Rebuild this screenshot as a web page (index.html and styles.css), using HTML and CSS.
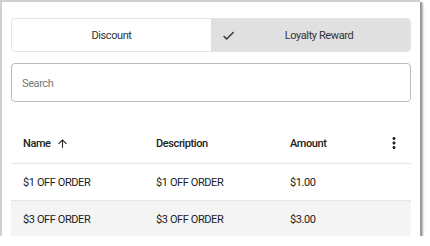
FILE: index.html
```html
<!DOCTYPE html>
<html lang="en">
<head>
    <meta charset="UTF-8">
    <meta name="viewport" content="width=device-width, initial-scale=1.0">
    <title>Rewards</title>
    <link rel="stylesheet" href="styles.css">
</head>
<body>
    <div class="panel">
        <div class="toggle">
            <button class="opt"><span class="label">Discount</span></button>
            <button class="opt selected">
                <svg class="check" viewBox="0 0 24 24" width="15" height="15"><path d="M9 16.17L4.83 12l-1.42 1.41L9 19 21 7l-1.41-1.41z"/></svg>
                <span class="label">Loyalty Reward</span>
            </button>
        </div>
        <div class="search">
            <input type="text" placeholder="Search">
        </div>
        <div class="table">
            <div class="row head">
                <div class="cell">Name
                    <svg class="sort" viewBox="0 0 24 24" width="13" height="13"><path d="M4 12l1.41 1.41L11 7.83V20h2V7.83l5.58 5.59L20 12l-8-8-8 8z"/></svg>
                </div>
                <div class="cell">Description</div>
                <div class="cell">Amount</div>
                <div class="cell menu">
                    <svg viewBox="0 0 24 24" width="18" height="18"><path d="M12 8c1.1 0 2-.9 2-2s-.9-2-2-2-2 .9-2 2 .9 2 2 2zm0 2c-1.1 0-2 .9-2 2s.9 2 2 2 2-.9 2-2-.9-2-2-2zm0 6c-1.1 0-2 .9-2 2s.9 2 2 2 2-.9 2-2-.9-2-2-2z"/></svg>
                </div>
            </div>
            <div class="row">
                <div class="cell">$1 OFF ORDER</div>
                <div class="cell">$1 OFF ORDER</div>
                <div class="cell">$1.00</div>
                <div class="cell"></div>
            </div>
            <div class="row alt">
                <div class="cell">$3 OFF ORDER</div>
                <div class="cell">$3 OFF ORDER</div>
                <div class="cell">$3.00</div>
                <div class="cell"></div>
            </div>
        </div>
    </div>
</body>
</html>
```

FILE: styles.css
```css
body {
    margin: 0;
    background: #fff;
    font-family: Roboto, "Liberation Sans", Arial, sans-serif;
    font-size: 11px;
    letter-spacing: -0.4px;
    color: #212121;
}
.panel {
    width: 400px;
    height: 218px;
    padding: 16px 9px 0 9px;
    border-left: 2px solid #d0d0d0;
    border-top: 2px solid #d0d0d0;
    box-shadow: 2px 2px 0 #9a9a9a, 3px 3px 2px #b0b0b0;
    overflow: hidden;
}
.toggle {
    display: flex;
    height: 34px;
    border: 1px solid #e4e4e4;
    border-radius: 4px;
    overflow: hidden;
    box-sizing: border-box;
}
.opt {
    flex: 1;
    border: none;
    margin: 0;
    padding: 0 8px;
    background: #fff;
    font-family: inherit;
    font-size: 11px;
    letter-spacing: -0.4px;
    color: #333;
    display: flex;
    align-items: center;
}
.opt.selected {
    background: #e0e0e0;
}
.label {
    flex: 1;
    text-align: center;
}
.check {
    fill: #333;
    margin-left: 2px;
}
.search {
    margin-top: 11px;
    height: 39px;
    border: 1px solid #bdbdbd;
    border-radius: 4px;
    box-sizing: border-box;
    display: flex;
    align-items: center;
}
.search input {
    border: none;
    outline: none;
    font-family: inherit;
    font-size: 11px;
    letter-spacing: -0.4px;
    padding: 2px 10px 0;
    width: 100%;
    background: transparent;
}
.search input::placeholder {
    color: #777;
}
.table {
    margin-top: 21px;
}
.row {
    display: grid;
    grid-template-columns: 133px 134px 1fr 40px;
    height: 36px;
    align-items: center;
    border-bottom: 1px solid #e6e6e6;
}
.row.head {
    height: 40px;
    font-weight: 500;
}
.row.alt {
    background: #f4f4f4;
    border-bottom: none;
}
.cell {
    padding-left: 12px;
    display: flex;
    align-items: center;
}
.sort {
    margin-left: 5px;
    fill: #222;
}
.menu {
    padding-left: 14px;
}
.menu svg {
    fill: #222;
}
```
